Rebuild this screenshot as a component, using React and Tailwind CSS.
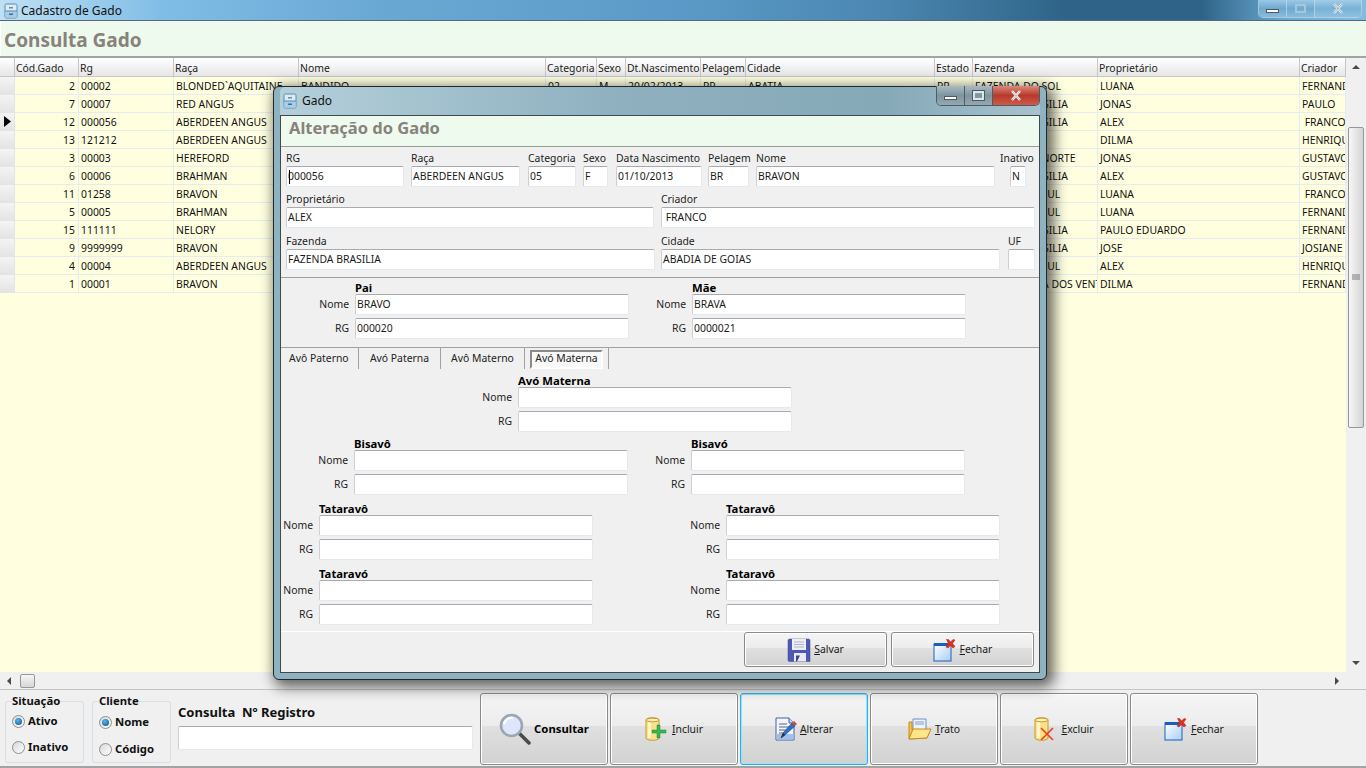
import React from 'react';

const rows = [
  { cod: 2, rg: '00002', raca: 'BLONDED`AQUITAINE', nome: 'BANDIDO', cat: '02', sexo: 'M', nasc: '20/02/2013', pel: 'PP', cidade: 'ABATIA', uf: 'PR', faz: 'FAZENDA DO SOL', prop: 'LUANA', cri: 'FERNANDO' },
  { cod: 7, rg: '00007', raca: 'RED ANGUS', faz: 'FAZENDA BRASILIA', prop: 'JONAS', cri: 'PAULO' },
  { cod: 12, rg: '000056', raca: 'ABERDEEN ANGUS', nome: 'BRAVON', cat: '05', sexo: 'F', nasc: '01/10/2013', pel: 'BR', cidade: 'ABADIA DE GOIAS', faz: 'FAZENDA BRASILIA', prop: 'ALEX', cri: '\u00a0FRANCO', sel: true },
  { cod: 13, rg: '121212', raca: 'ABERDEEN ANGUS', prop: 'DILMA', cri: 'HENRIQUE' },
  { cod: 3, rg: '00003', raca: 'HEREFORD', faz: 'FAZENDA DO NORTE', prop: 'JONAS', cri: 'GUSTAVO' },
  { cod: 6, rg: '00006', raca: 'BRAHMAN', faz: 'FAZENDA BRASILIA', prop: 'ALEX', cri: 'GUSTAVO' },
  { cod: 11, rg: '01258', raca: 'BRAVON', faz: 'FAZENDA DO SUL', prop: 'LUANA', cri: '\u00a0FRANCO' },
  { cod: 5, rg: '00005', raca: 'BRAHMAN', faz: 'FAZENDA DO SUL', prop: 'LUANA', cri: 'FERNANDO' },
  { cod: 15, rg: '111111', raca: 'NELORY', faz: 'FAZENDA BRASILIA', prop: 'PAULO EDUARDO', cri: 'FERNANDO' },
  { cod: 9, rg: '9999999', raca: 'BRAVON', faz: 'FAZENDA BRASILIA', prop: 'JOSE', cri: 'JOSIANE' },
  { cod: 4, rg: '00004', raca: 'ABERDEEN ANGUS', faz: 'FAZENDA DO SUL', prop: 'ALEX', cri: 'HENRIQUE' },
  { cod: 1, rg: '00001', raca: 'BRAVON', faz: 'FAZENDA CASA DOS VENTOS', prop: 'DILMA', cri: 'FERNANDO' },
];

const colunas = ['Cód.Gado', 'Rg', 'Raça', 'Nome', 'Categoria', 'Sexo', 'Dt.Nascimento', 'Pelagem', 'Cidade', 'Estado', 'Fazenda', 'Proprietário', 'Criador'];
const gridCols = 'grid grid-cols-[15px_64px_95px_125px_247px_51px_29px_75px_45px_189px_38px_125px_202px_46px]';
const btnBg = 'bg-[linear-gradient(180deg,#f5f5f5_0%,#ececec_46%,#e0e0e0_46%,#d2d2d2_100%)]';

function IconGaveta() {
  return (
    <svg width="16" height="16" viewBox="0 0 16 16">
      <rect x="2" y="1" width="12" height="14" rx="1.5" fill="#dfe9f1" stroke="#4f8fb8" />
      <rect x="2.5" y="8" width="11" height="6.5" fill="#a9cde6" />
      <line x1="2" y1="8" x2="14" y2="8" stroke="#4f8fb8" />
      <rect x="6" y="4" width="4" height="1.5" fill="#6b8da5" />
      <rect x="6" y="10.5" width="4" height="1.5" fill="#3f6f92" />
    </svg>
  );
}

function IconLupa() {
  return (
    <svg width="32" height="32" viewBox="0 0 32 32">
      <line x1="20" y1="20" x2="30" y2="30" stroke="#4a4a4a" strokeWidth="3.5" strokeLinecap="round" />
      <circle cx="12.5" cy="12.5" r="10.5" fill="#dde6fb" stroke="#9aa7b3" strokeWidth="2.6" />
      <path d="M5 11a8 8 0 0 1 9-6" fill="none" stroke="#ffffff" strokeWidth="2" />
    </svg>
  );
}

function IconCilindro({ children }) {
  return (
    <svg width="24" height="24" viewBox="0 0 24 24">
      <path d="M1 3c0-3 13-3 13 0v18c0 3-13 3-13 0z" fill="#fbe28a" stroke="#c79a2c" />
      <rect x="3" y="4" width="3" height="17" fill="#fff6c9" />
      <ellipse cx="7.5" cy="3" rx="6.5" ry="1.8" fill="#fff3bd" stroke="#c79a2c" />
      {children}
    </svg>
  );
}

function IconIncluir() {
  return (
    <IconCilindro>
      <path d="M7 13h5V8h3v5h6v3h-6v5h-3v-5H7z" fill="#39b54a" stroke="#1f8a38" strokeWidth="0.5" />
    </IconCilindro>
  );
}

function IconExcluir() {
  return (
    <IconCilindro>
      <path d="M7 11l12 12M19 11L7 23" stroke="#e8401c" strokeWidth="1.6" fill="none" />
    </IconCilindro>
  );
}

function IconAlterar() {
  return (
    <svg width="22" height="24" viewBox="0 0 22 24">
      <path d="M1 1h13l5 5v17H1z" fill="#f2f6fc" stroke="#4a5f9e" />
      <path d="M14 1v5h5" fill="#c9d6ef" stroke="#4a5f9e" />
      <rect x="1.5" y="17" width="17" height="5.5" fill="#9fc0e8" />
      <path d="M4 7h8M4 10h10M4 13h7M4 16h5" stroke="#55657f" strokeWidth="1" />
      <path d="M6 21l2-5L17 6l3 3-10 9z" fill="#2f6fc4" stroke="#1f3f7a" strokeWidth="0.6" />
      <path d="M17 6l2-2 3 3-2 2z" fill="#e0452a" />
      <path d="M6 21l2-5 2 2z" fill="#3a2a20" />
    </svg>
  );
}

function IconPasta() {
  return (
    <svg width="24" height="22" viewBox="0 0 24 22">
      <path d="M5 1h13v12H5z" fill="#eef3fb" stroke="#6d8fc0" />
      <path d="M7 4h9M7 6h9" stroke="#7d9fcc" />
      <path d="M1 4h3v8h13l5 0-3 8-18 1z" fill="#f2c14e" stroke="#c98a1c" />
      <path d="M1 21l4-10h18l-4 9z" fill="#fde58c" stroke="#c98a1c" />
    </svg>
  );
}

function IconFechar() {
  return (
    <svg width="24" height="24" viewBox="0 0 24 24">
      <defs>
        <linearGradient id="jan" x1="0" y1="0" x2="1" y2="1">
          <stop offset="0" stopColor="#ffffff" />
          <stop offset="1" stopColor="#a8cdf5" />
        </linearGradient>
      </defs>
      <rect x="1" y="6" width="17" height="17" fill="url(#jan)" stroke="#1a5fc0" />
      <rect x="1" y="5" width="17" height="3" fill="#1a5fc0" />
      <path d="M13.5 1.5l2 0 2 2.5 2.5-2.5 2 0.5-2.5 3.5 2.5 3-2 1.5-2.5-2.5-2.5 2.5-2-1 2.5-3.5z" fill="#e0301e" stroke="#a82014" strokeWidth="0.5" />
    </svg>
  );
}

function IconSalvar() {
  return (
    <svg width="24" height="24" viewBox="0 0 24 24">
      <path d="M1 2.5A1.5 1.5 0 0 1 2.5 1h19A1.5 1.5 0 0 1 23 2.5v21H2.5A1.5 1.5 0 0 1 1 22z" fill="#4f58b5" stroke="#3d4590" strokeWidth="0.5" />
      <rect x="5" y="1" width="14" height="11" fill="#eceef5" />
      <path d="M7 4h10M7 6.5h10M7 9h10" stroke="#b0b4c8" />
      <rect x="7" y="15" width="12" height="8.5" fill="#e9ebf3" />
      <path d="M9 23.5l0-6h4l-3 6z" fill="#3d4590" />
    </svg>
  );
}

function Seta({ dir }) {
  const pts = { up: '0,5 4,1 8,5', down: '0,1 4,5 8,1', left: '5,0 1,4 5,8', right: '1,0 5,4 1,8' };
  return (
    <svg width="8" height="8" viewBox="0 0 8 8">
      <polygon points={pts[dir]} fill="#4a4a4a" />
    </svg>
  );
}

function Botao({ icon, className, foco, children }) {
  return (
    <button className={`flex items-center justify-center gap-[3px] rounded-[3px] border text-[10.4px] text-[#1a1a1a] ${foco ? 'border-[#25b4e8] shadow-[inset_0_0_0_1px_#9fe0f6]' : 'border-[#8a8a8a] shadow-[inset_0_0_0_1px_#fff]'} ${btnBg} ${className}`}>
      {icon}
      <span className="pt-px">{children}</span>
    </button>
  );
}

function Campo({ className, children }) {
  return (
    <div className={`flex h-[21px] items-center overflow-hidden whitespace-nowrap rounded-[2px] border border-[#e3e9ef] border-t-[#a9a9b0] border-l-[#cfcfd4] bg-white pl-[1px] text-[10.4px] text-[#1a1a1a] ${className}`}>
      {children}
    </div>
  );
}

function Rotulado({ label, className, lblClass = '', children, campoClass = 'w-full' }) {
  return (
    <div className={`flex flex-col ${className}`}>
      <div className={`h-[14px] whitespace-nowrap text-[10.4px] leading-[12px] text-[#222] ${lblClass}`}>{label}</div>
      <Campo className={campoClass}>{children}</Campo>
    </div>
  );
}

function Pessoa({ titulo, nome, rg }) {
  return (
    <div className="flex flex-col">
      <div className="ml-[36px] h-[12px] whitespace-nowrap text-[11.3px] font-bold leading-[12px] text-black">{titulo}</div>
      <div className="flex items-center">
        <span className="mr-[6px] w-[30px] text-right text-[10.4px] text-[#222]">Nome</span>
        <Campo className="w-[274px]">{nome}</Campo>
      </div>
      <div className="mt-[3px] flex items-center">
        <span className="mr-[6px] w-[30px] text-right text-[10.4px] text-[#222]">RG</span>
        <Campo className="w-[274px]">{rg}</Campo>
      </div>
    </div>
  );
}

function Radio({ on, label, className = '' }) {
  return (
    <label className={`flex items-center gap-[3px] text-[11.3px] font-bold text-[#111] ${className}`}>
      <span className="flex h-[13px] w-[13px] items-center justify-center rounded-full border border-[#8e8f8f] bg-[linear-gradient(135deg,#d8d8d8,#ffffff)]">
        {on && <span className="h-[7px] w-[7px] rounded-full bg-[radial-gradient(circle_at_40%_35%,#57b7f0,#0a4f86)]" />}
      </span>
      {label}
    </label>
  );
}

function Controles({ dialog }) {
  const x = (
    <svg width="14" height="11" viewBox="0 0 14 11">
      <path d="M3 1l8 9M11 1l-8 9" stroke={dialog ? '#fff' : '#e8f0f5'} strokeWidth="2.4" fill="none" />
      <path d="M3 1l8 9M11 1l-8 9" stroke="#5b6a75" strokeWidth="0.5" fill="none" />
    </svg>
  );
  return (
    <div className={`flex self-start overflow-hidden rounded-b-[5px] border border-t-0 ${dialog ? 'h-[20px] border-[#4d5d66]' : 'h-[18px] border-[#c9dbe6]/70'}`}>
      <div className={`flex w-[28px] items-center justify-center border-r ${dialog ? 'border-[#4d5d66] bg-[linear-gradient(180deg,#a8bac4,#7e949f_50%,#95a8b2)]' : 'border-[#c9dbe6]/70 bg-[linear-gradient(180deg,#9cc9e6,#6fa9cf_50%,#88bcdc)]'}`}>
        <div className="mt-[4px] h-[4px] w-[13px] border border-[#4c5a63] bg-white" />
      </div>
      <div className={`flex w-[28px] items-center justify-center border-r ${dialog ? 'border-[#4d5d66] bg-[linear-gradient(180deg,#a8bac4,#7e949f_50%,#95a8b2)]' : 'border-[#c9dbe6]/70 bg-[linear-gradient(180deg,#9cc9e6,#6fa9cf_50%,#88bcdc)]'}`}>
        <div className={`h-[9px] w-[11px] border-2 ${dialog ? 'border-[#dfe6ea] outline outline-[#4c5a63]' : 'border-[#a6c6da]'}`} />
      </div>
      <div className={`flex w-[46px] items-center justify-center ${dialog ? 'bg-[linear-gradient(180deg,#d98a7c,#b8392b_50%,#cf5a48)]' : 'bg-[linear-gradient(180deg,#a2cde8,#78b2d6_50%,#8fc1e0)]'}`}>
        {x}
      </div>
    </div>
  );
}

function Dialogo() {
  return (
    <div className="absolute left-[273px] top-[86px] flex h-[594px] w-[774px] flex-col rounded-[6px] border border-[#20292e] bg-[#8fb2c1] px-[6px] pb-[6px] shadow-[4px_4px_14px_3px_rgba(0,0,0,0.6)]">
      <div className="flex h-[28px] shrink-0 items-center rounded-t-[5px] bg-[linear-gradient(90deg,#b4cfda,#8eb0bf_45%,#86a9b8_80%,#a7c2ce)]">
        <div className="ml-[2px]"><IconGaveta /></div>
        <span className="ml-[4px] font-['Open_Sans',sans-serif] text-[12px] text-[#111]">Gado</span>
        <div className="ml-auto -mt-[1px] self-start"><Controles dialog /></div>
      </div>
      <div className="flex min-h-0 flex-1 flex-col border border-[#3f4a50] bg-[#f0f0f0]">
        <div className="flex h-[31px] shrink-0 items-center border-b border-[#9a9a9a] bg-[#eefaee] pl-[8px] pb-[6px] font-['DejaVu_Sans',sans-serif] text-[16.5px] font-bold text-[#87827b]">
          Alteração do Gado
        </div>

        <div className="h-[131px] shrink-0 border-b border-[#a0a0a0] pl-[5px] pt-[5px]">
          <div className="flex">
            <Rotulado label="RG" className="w-[118px]" campoClass="relative w-full border-[#7fb5e0] border-t-[#4a86b5] border-l-[#6fa3cc]">
              <span className="absolute left-[2px] top-[3px] h-[14px] w-px bg-black" />
              000056
            </Rotulado>
            <Rotulado label="Raça" className="ml-[7px] w-[109px]">ABERDEEN ANGUS</Rotulado>
            <Rotulado label="Categoria" className="ml-[8px] w-[48px]">05</Rotulado>
            <Rotulado label="Sexo" className="ml-[7px] w-[25px]">F</Rotulado>
            <Rotulado label="Data Nascimento" className="ml-[8px] w-[86px]">01/10/2013</Rotulado>
            <Rotulado label="Pelagem" className="ml-[6px] w-[41px]">BR</Rotulado>
            <Rotulado label="Nome" className="ml-[7px] w-[239px]">BRAVON</Rotulado>
            <Rotulado label="Inativo" className="ml-[15px] w-[16px]" lblClass="-ml-[10px] w-[36px]">N</Rotulado>
          </div>
          <div className="mt-[6px] flex">
            <Rotulado label="Proprietário" className="w-[368px]">ALEX</Rotulado>
            <Rotulado label="Criador" className="ml-[7px] w-[374px]">{'\u00a0FRANCO'}</Rotulado>
          </div>
          <div className="mt-[7px] flex">
            <Rotulado label="Fazenda" className="w-[369px]">FAZENDA BRASILIA</Rotulado>
            <Rotulado label="Cidade" className="ml-[6px] w-[339px]">ABADIA DE GOIAS</Rotulado>
            <Rotulado label="UF" className="ml-[8px] w-[27px]" />
          </div>
        </div>

        <div className="flex h-[70px] shrink-0 gap-[27px] border-b border-[#a0a0a0] pl-[38px] pt-[4px]">
          <Pessoa titulo="Pai" nome="BRAVO" rg="000020" />
          <Pessoa titulo="Mãe" nome="BRAVA" rg="0000021" />
        </div>

        <div className="flex h-[21px] shrink-0 text-[10.4px] text-[#222]">
          <div className="flex w-[78px] items-center border-r border-[#a0a0a0] pl-[8px]">Avô Paterno</div>
          <div className="flex w-[82px] items-center justify-center border-r border-[#a0a0a0]">Avó Paterna</div>
          <div className="flex w-[84px] items-center justify-center border-r border-[#a0a0a0]">Avô Materno</div>
          <div className="flex w-[84px] items-center border-r border-[#a0a0a0] px-[5px] pt-px">
            <div className="flex h-[19px] w-full items-center justify-center border-2 border-[#8a8a8a] border-b-white border-r-white bg-[#f8f8f8]">Avó Materna</div>
          </div>
        </div>

        <div className="flex min-h-0 flex-1 flex-col pt-[6px]">
          <div className="ml-[201px]"><Pessoa titulo="Avó Materna" nome="" rg="" /></div>
          <div className="ml-[37px] mt-[6px] flex gap-[27px]">
            <Pessoa titulo="Bisavô" nome="" rg="" />
            <Pessoa titulo="Bisavó" nome="" rg="" />
          </div>
          <div className="ml-[2px] mt-[8px] flex gap-[97px]">
            <Pessoa titulo="Tataravô" nome="" rg="" />
            <Pessoa titulo="Tataravô" nome="" rg="" />
          </div>
          <div className="ml-[2px] mt-[8px] flex gap-[97px]">
            <Pessoa titulo="Tataravó" nome="" rg="" />
            <Pessoa titulo="Tataravô" nome="" rg="" />
          </div>
        </div>

        <div className="flex h-[41px] shrink-0 justify-end gap-[4px] border-t border-white pr-[5px]">
          <Botao icon={<IconSalvar />} className="h-[35px] w-[143px]"><u>S</u>alvar</Botao>
          <Botao icon={<IconFechar />} className="h-[35px] w-[143px]"><u>F</u>echar</Botao>
        </div>
      </div>
    </div>
  );
}

export default function App() {
  return (
    <div className="relative flex h-[768px] w-full flex-col overflow-hidden bg-[#f0f0f0] font-['DejaVu_Sans_Condensed','DejaVu_Sans',sans-serif] text-[10.4px]">
      {/* barra de titulo */}
      <div className="flex h-[21px] shrink-0 items-center border-b border-[#55697a] bg-[linear-gradient(90deg,#bfe0f4_0%,#7fbde6_12%,#6aa8d4_28%,#5b9ac8_50%,#4a86b0_65%,#2f6488_78%,#2f6488_88%,#6aa8d0_94%,#82bde0_100%)] pl-[3px] pt-[2px]">
        <IconGaveta />
        <span className="ml-[2px] font-['Open_Sans',sans-serif] text-[12px] text-[#111]">Cadastro de Gado</span>
        <div className="ml-auto -mt-[2px] mr-[4px] self-start"><Controles /></div>
      </div>

      <div className="flex h-[35px] shrink-0 items-center border-l border-white bg-[#eefaee] pl-[3px] pt-[3px] font-['DejaVu_Sans',sans-serif] text-[19px] font-bold text-[#87827b]">
        Consulta Gado
      </div>
      <div className="h-[2px] shrink-0 bg-[#a3a3a3]" />

      {/* grade */}
      <div className="flex h-[614px] shrink-0">
        <div className="w-[1346px] overflow-hidden bg-[#ffffe0]">
          <div className={`${gridCols} h-[19px]`}>
            <div className="border-r border-b border-[#c6c6c6] bg-[linear-gradient(180deg,#ffffff,#e6e6e6)]" />
            {colunas.map((c) => (
              <div key={c} className="overflow-hidden whitespace-nowrap border-r border-b border-[#c6c6c6] bg-[linear-gradient(180deg,#ffffff,#e6e6e6)] pl-px pt-px text-[#222] leading-[18px]">{c}</div>
            ))}
          </div>
          {rows.map((r) => (
            <div key={r.cod} className={`${gridCols} h-[18px] text-[#111]`}>
              <div className="flex items-center justify-center border-b border-r border-[#dfe5ea] bg-[linear-gradient(180deg,#f4f4f4,#e4e4e4)]">
                {r.sel && (
                  <svg width="7" height="11" viewBox="0 0 7 11"><polygon points="0,0 7,5.5 0,11" fill="#000" /></svg>
                )}
              </div>
              <div className="overflow-hidden border-b border-r border-[#e4ecf2] pr-[3px] pt-px text-right leading-[16px]">{r.cod}</div>
              {[r.rg, r.raca, r.nome, r.cat, r.sexo, r.nasc, r.pel, r.cidade, r.uf, r.faz, r.prop, r.cri].map((v, i) => (
                <div key={i} className="overflow-hidden whitespace-nowrap border-b border-r border-[#e4ecf2] pl-[2px] pt-px leading-[16px]">{v}</div>
              ))}
            </div>
          ))}
        </div>
        <div className="flex w-[20px] flex-col bg-[#f0f0f0]">
          <div className="flex h-[19px] shrink-0 items-center justify-center"><Seta dir="up" /></div>
          <div className="ml-[2px] mt-[50px] flex h-[301px] w-[16px] items-center justify-center rounded-[2px] border border-[#979797] bg-[linear-gradient(90deg,#f6f6f6,#e6e6e6_50%,#d4d4d4)]">
            <svg width="8" height="7" viewBox="0 0 8 7"><path d="M0 1h8M0 3h8M0 5h8" stroke="#7a7a7a" /></svg>
          </div>
          <div className="mt-auto flex h-[17px] items-center justify-center"><Seta dir="down" /></div>
        </div>
      </div>

      <div className="flex h-[17px] w-[1346px] shrink-0 items-center bg-[#f0f0f0] pl-[6px]">
        <Seta dir="left" />
        <div className="ml-[6px] h-[14px] w-[15px] rounded-[2px] border border-[#979797] bg-[linear-gradient(180deg,#f6f6f6,#d6d6d6)]" />
        <div className="ml-auto mr-[4px]"><Seta dir="right" /></div>
      </div>
      <div className="h-px shrink-0 bg-[#c4c4c4]" />

      {/* painel inferior */}
      <div className="flex min-h-0 flex-1 border-b-2 border-[#a3a3a3] bg-[#f0f0f0]">
        <fieldset className="ml-[5px] mt-[3px] h-[70px] w-[79px] rounded-[3px] border border-[#d6dfe6]">
          <legend className="ml-[6px] -mt-[2px] text-[11.3px] font-bold text-[#111]">Situação</legend>
          <Radio on label="Ativo" className="ml-[6px] mt-[3px]" />
          <Radio label="Inativo" className="ml-[6px] mt-[9px]" />
        </fieldset>
        <fieldset className="ml-[8px] mt-[3px] h-[70px] w-[79px] rounded-[3px] border border-[#d6dfe6]">
          <legend className="ml-[6px] -mt-[2px] text-[11.3px] font-bold text-[#111]">Cliente</legend>
          <Radio on label="Nome" className="ml-[6px] mt-[4px]" />
          <Radio label="Código" className="ml-[6px] mt-[10px]" />
        </fieldset>
        <div className="ml-[7px] flex flex-col pt-[14px]">
          <div className="h-[22px] whitespace-nowrap font-['DejaVu_Sans',sans-serif] text-[13px] font-bold leading-[16px] text-[#111]">Consulta&nbsp; Nº Registro</div>
          <Campo className="h-[24px] w-[295px]" />
        </div>
        <div className="ml-[7px] mt-[3px] flex gap-[2px]">
          <Botao icon={<IconLupa />} className="h-[72px] w-[128px] text-[11.3px] font-bold"><span className="text-black">Consultar</span></Botao>
          <Botao icon={<IconIncluir />} className="h-[72px] w-[128px]"><u>I</u>ncluir</Botao>
          <Botao icon={<IconAlterar />} foco className="h-[72px] w-[128px]"><u>A</u>lterar</Botao>
          <Botao icon={<IconPasta />} className="h-[72px] w-[128px]"><u>T</u>rato</Botao>
          <Botao icon={<IconExcluir />} className="h-[72px] w-[128px]"><u>E</u>xcluir</Botao>
          <Botao icon={<IconFechar />} className="h-[72px] w-[128px]"><u>F</u>echar</Botao>
        </div>
      </div>

      <Dialogo />
    </div>
  );
}
